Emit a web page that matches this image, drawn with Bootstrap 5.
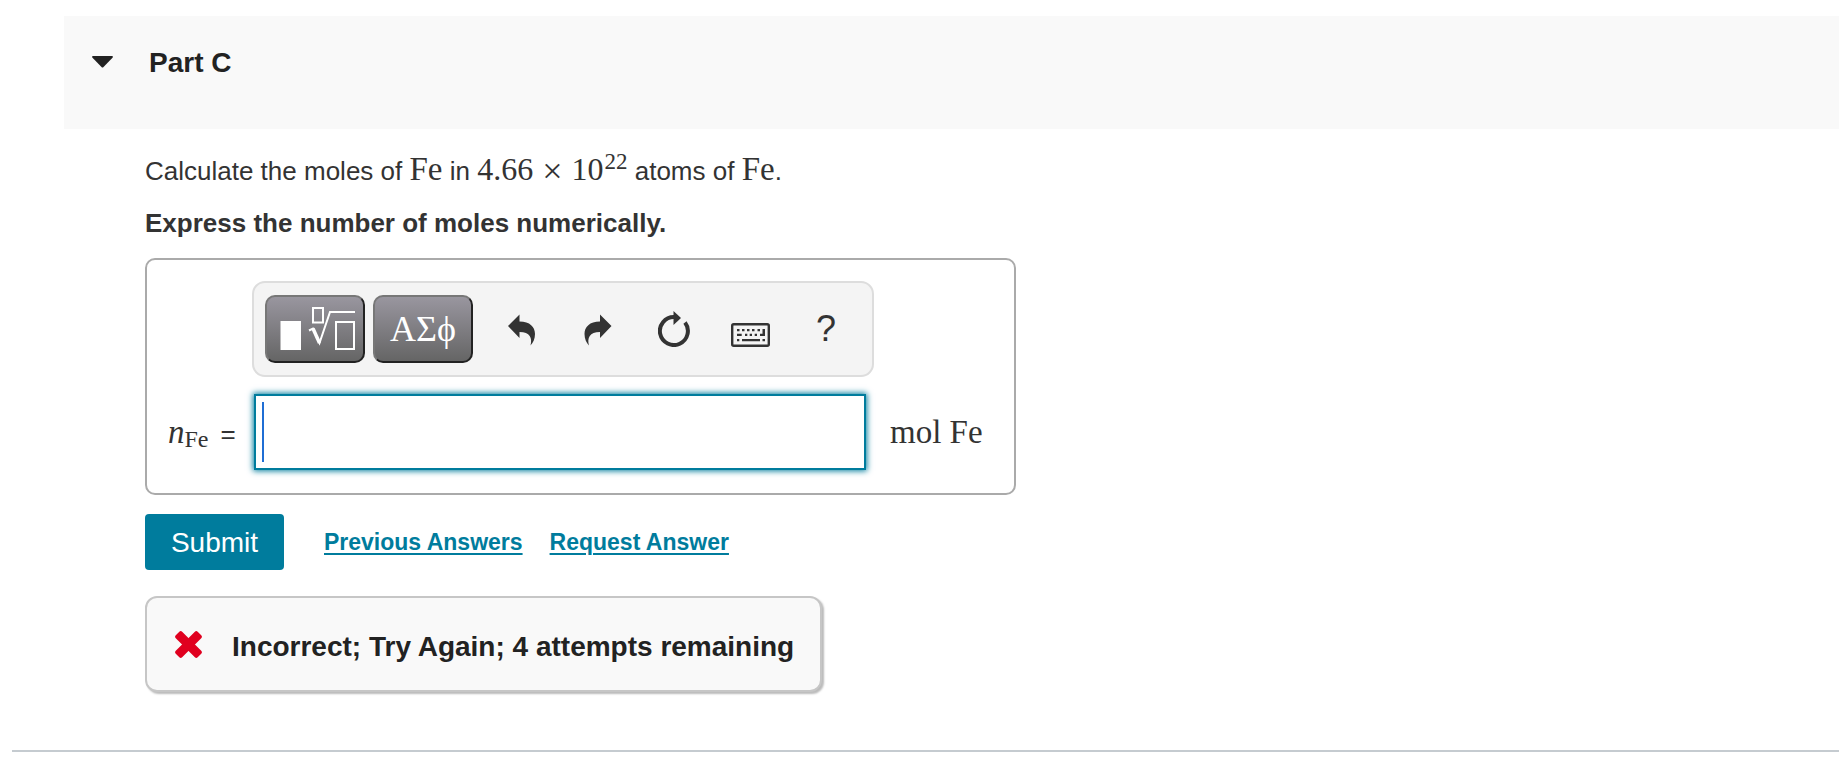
<!DOCTYPE html>
<html lang="en">
<head>
<meta charset="utf-8">
<meta name="viewport" content="width=device-width, initial-scale=1">
<title>Part C</title>
<link href="https://cdn.jsdelivr.net/npm/bootstrap@5.3.0/dist/css/bootstrap.min.css" rel="stylesheet">
<style>
  body { font-family: "Liberation Sans", Arial, sans-serif; font-size: 26px; line-height: 32px; color: #333; background: #fff; }
  .part-section { margin-left: 12px; padding: 16px 0 58px; border-bottom: 2px solid #c5cbd0; }
  .part-header { margin-left: 52px; padding: 31px 28px 50px; background: #f9f9f9; color: #222; }
  .part-title { font-size: 28px; line-height: 32px; }
  .part-toggle { width: 21px; margin-right: 36px; margin-bottom: 3px; }
  .part-body { padding-left: 133px; padding-top: 24px; }
  .question-text { line-height: 32px; margin-bottom: 20px; }
  .math-text { font-family: "Liberation Serif", "Times New Roman", serif; font-size: 33px; line-height: 32px; }
  .math-num { font-size: 32px; }
  .math-text sup { font-size: 23px; line-height: 0; top: 0; vertical-align: 11px; margin-left: 1px; }
  .math-text sub { font-size: 24px; line-height: 0; bottom: 0; vertical-align: -4px; }
  .times-sign { margin: 0 9px; font-size: 36px; line-height: 0; vertical-align: -3px; }
  .answer-box { display: inline-grid; grid-template-columns: 105px 622px auto; align-items: center; row-gap: 17px; margin-top: 19px; padding: 21px 31px 23px 0; border: 2px solid #aaa; border-radius: 10px; }
  .tool-bar { grid-column: 2; height: 96px; padding-left: 11px; background: #f4f4f4; border: 2px solid #ddd; border-radius: 13px; }
  .answer-box label { grid-column: 1; padding-left: 21px; padding-top: 2px; }
  .equals-sign { margin-left: 12px; }
  .palette-btn { flex: none; width: 100px; height: 68px; margin-right: 8px; padding: 0; border: 2px solid; border-color: #777 #222 #222 #777; border-radius: 10px; background: linear-gradient(#99969f, #656565); color: #fff; font-family: "Liberation Serif", serif; font-size: 36px; line-height: 54px; overflow: hidden; }
  .icon-group { padding-left: 3px; }
  .icon-btn { width: 76px; height: 68px; padding: 0; border: 0; background: none; color: #333; }
  .help-btn { font-size: 36px; }
  .answer-input { width: 612px; height: 76px; margin-left: 2px; padding: 0 16px; border: 2px solid #007c9d; font-size: 30px; outline: 0;
    background: linear-gradient(#1f6ed4, #1f6ed4) 6px 6px / 2px 60px no-repeat #fff; box-shadow: 0 0 6px 1px #007c9d; }
  .unit-text { padding-left: 16px; }
  .action-row { margin-top: 19px; }
  .submit-btn { width: 139px; height: 56px; margin-right: 40px; padding: 2px 0 0; border: 0; border-radius: 4px; background: #007c9d; color: #fff; font-size: 28px; line-height: 54px; }
  .answer-link { margin-right: 27px; color: #007c9d; font-size: 23px; font-weight: 700; text-underline-offset: 3px; text-decoration-thickness: 2px; }
  .feedback-box { display: inline-flex; align-items: center; height: 96px; margin-top: 26px; padding: 6px 26px 0 28px; border: 2px solid #c6c6c6; border-radius: 12px; background: #f9f9f9; box-shadow: 2px 2px 2px #bbb; color: #222; font-size: 28px; font-weight: 700; }
  .feedback-box svg { margin-right: 30px; margin-bottom: 5px; }
</style>
</head>
<body>
<main class="part-section">
  <header class="part-header">
    <h2 class="part-title fw-bold mb-0">
      <button type="button" class="d-flex align-items-center border-0 bg-transparent p-0 fw-bold text-reset text-start">
        <svg class="part-toggle" height="12" viewBox="0 0 21 12" aria-hidden="true"><path d="M1 0H20Q21.500 .5 20.500 1.700L11.500 11Q10.500 12 9.500 11L.5 1.700Q-.5.5 1 0Z" fill="#222"/></svg>
        <span>Part C</span>
      </button>
    </h2>
  </header>
  <div class="part-body">
    <p class="question-text">Calculate the moles of <span class="math-text">Fe</span> in <span class="math-text math-num">4.66<span class="times-sign">×</span>10<sup>22</sup></span> atoms of <span class="math-text">Fe</span>.</p>
    <p class="fw-bold mb-0">Express the number of moles numerically.</p>

    <form>
      <div class="answer-box">
        <div class="tool-bar d-flex align-items-center">
          <button type="button" class="palette-btn" aria-label="Templates">
            <svg class="d-block" width="96" height="64" viewBox="2 2 96 64" fill="none" stroke="#fff" stroke-width="2">
              <path d="M15.500 26H36V55H15.500Z" fill="#fff" stroke="none"/>
              <path d="M48 13H58V27.500H48ZM71 27H89V54H71Z"/>
              <path d="M44 35.500L48 33.500L54.500 48L65 17H90"/>
              <path d="M48 33.500L54.500 48" stroke-width="3.500"/>
            </svg>
          </button>
          <button type="button" class="palette-btn" aria-label="Greek symbols">ΑΣϕ</button>
          <div class="icon-group d-flex">
            <button type="button" class="icon-btn" aria-label="Undo"><svg width="28" height="32" viewBox="0 0 28 32"><path d="M0 12L11.500 .5V7.500C22 7.500 27 13 27 20C27 25 25 29 22.500 31.500C24.500 24 22 18 11.500 18V24Z" fill="#333"/></svg></button>
            <button type="button" class="icon-btn" aria-label="Redo"><svg width="28" height="32" viewBox="0 0 28 32"><path d="M27.500 12L16 .5V7.500C5.500 7.500 .5 13 .5 20C.5 25 2.500 29 5 31.500C3 24 5.500 18 16 18V24Z" fill="#333"/></svg></button>
            <button type="button" class="icon-btn" aria-label="Reset"><svg width="32" height="36" viewBox="0 0 32 36"><path d="M16 6A14 14 0 1 0 27 11.500" fill="none" stroke="#333" stroke-width="4"/><path d="M15.500 0L23 7L15.500 14Z" fill="#333"/></svg></button>
            <button type="button" class="icon-btn pt-2" aria-label="Keyboard shortcuts"><svg width="39" height="24" viewBox="0 0 39 24"><rect x="1.200" y="1.200" width="36.600" height="21.600" rx="1.500" fill="none" stroke="#333" stroke-width="2.400"/><path d="M6 6h2.500v2.300H6zM11 6h2.500v2.300H11zM16 6h2.500v2.300H16zM21 6h2.500v2.300H21zM26.500 6h2.500v2.300H26.500zM31.500 6H34v7h-5v-2.300h2.500zM6 10.700h4.700v2.300H6zM14 10.700h2.300v2.300H14zM18.700 10.700H21v2.300h-2.300zM23.700 10.700H26v2.300h-2.300zM6 16h2.300v2.300H6zM11 16h18v2.300H11zM31.500 16H34v2.300h-2.500z" fill="#333"/></svg></button>
            <button type="button" class="icon-btn help-btn" aria-label="Help">?</button>
          </div>
        </div>
        <label for="answer"><span class="math-text"><i>n</i><sub>Fe</sub></span><span class="equals-sign">=</span></label>
        <input type="text" id="answer" class="answer-input" autocomplete="off">
        <span class="math-text unit-text">mol Fe</span>
      </div>
      <div class="action-row d-flex align-items-center">
        <button type="submit" class="submit-btn">Submit</button>
        <a href="#" class="answer-link">Previous Answers</a>
        <a href="#" class="answer-link">Request Answer</a>
      </div>
    </form>
    <div class="feedback-box" role="status">
      <svg width="27" height="27" viewBox="0 0 27 27" aria-hidden="true"><g fill="#e0001f"><rect x="-2" y="9" width="31" height="9" rx="2" transform="rotate(45 13.500 13.500)"/><rect x="-2" y="9" width="31" height="9" rx="2" transform="rotate(-45 13.500 13.500)"/></g></svg>
      Incorrect; Try Again; 4 attempts remaining
    </div>
  </div>
</main>
<script src="https://cdn.jsdelivr.net/npm/bootstrap@5.3.0/dist/js/bootstrap.bundle.min.js"></script>
</body>
</html>
